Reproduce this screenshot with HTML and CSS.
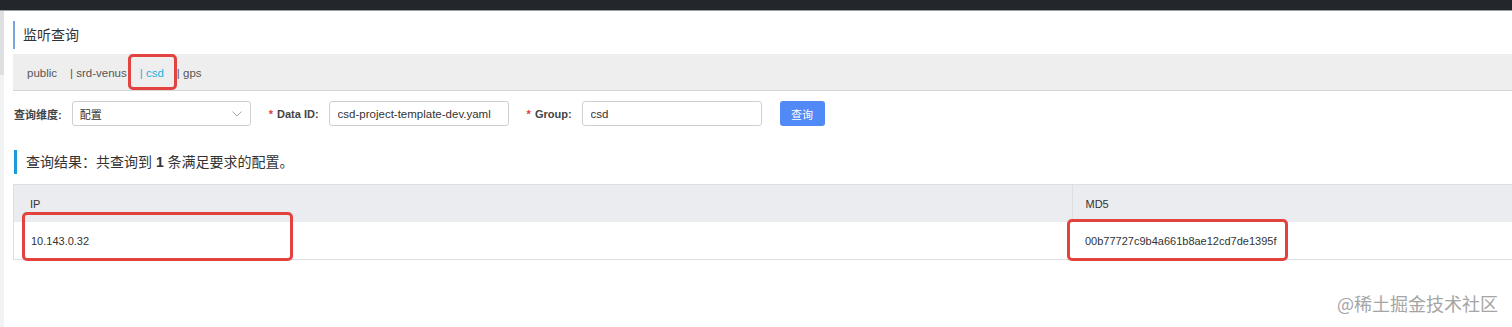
FILE: index.html
```html
<!DOCTYPE html>
<html lang="zh-CN">
<head>
  <meta charset="UTF-8" />
  <title>监听查询</title>
  <link rel="stylesheet" href="styles.css">
</head>
<body>

  <!-- top dark bar -->
  <div class="topbar"></div>

  <div class="layout">
    <div class="side"></div>

    <div class="main">
      <h2 class="page-title">监听查询</h2>

      <!-- namespace tabs -->
      <div class="tabs">
        <span class="tab">public</span>
        <span class="tab">| srd-venus</span>
        <span class="tab active">| csd</span>
        <span class="tab">| gps</span>
      </div>

      <!-- query form -->
      <div class="form-row">
        <div class="form-item">
          <label class="label">查询维度:</label>
          <div class="select">
            <span>配置</span>
            <svg class="arrow" width="10" height="6" viewBox="0 0 10 6">
              <polyline points="0.5,0.5 5,5 9.5,0.5" fill="none" stroke="#a8a8a8" stroke-width="1"/>
            </svg>
          </div>
        </div>
        <div class="form-item">
          <label class="label"><i class="req">*</i> Data ID:</label>
          <input class="input" type="text" value="csd-project-template-dev.yaml" />
        </div>
        <div class="form-item">
          <label class="label"><i class="req">*</i> Group:</label>
          <input class="input" type="text" value="csd" />
        </div>
        <button class="btn-primary">查询</button>
      </div>

      <h3 class="result-title">查询结果：共查询到 <b>1</b> 条满足要求的配置。</h3>

      <table class="table">
        <thead>
          <tr>
            <th class="col-ip">IP</th>
            <th class="col-md5">MD5</th>
          </tr>
        </thead>
        <tbody>
          <tr>
            <td class="col-ip">10.143.0.32</td>
            <td class="col-md5">00b77727c9b4a661b8ae12cd7de1395f</td>
          </tr>
        </tbody>
      </table>
    </div>
  </div>

  <!-- red annotation boxes drawn over the screenshot -->
  <div class="mark mark-tab"></div>
  <div class="mark mark-ip"></div>
  <div class="mark mark-md5"></div>

  <div class="watermark">@稀土掘金技术社区</div>

</body>
</html>
```

FILE: styles.css
```css
body {
  margin: 0;
  font-family: "Liberation Sans", Arial, "Noto Sans CJK SC", sans-serif;
  color: #333;
  background: #fff;
  height: 327px;
  overflow: hidden;
  position: relative;
}

.topbar {
  height: 10px;
  background: #23262b;
  border-bottom: 1px solid #9a9da2;
}

.layout {
  display: flex;
}

.side {
  width: 4px;
  height: 316px;
  background: linear-gradient(#dedfe1 0, #dedfe1 64px, #f1f2f3 64px);
}

.main {
  flex: 1;
  padding-left: 9px;
}

.page-title {
  margin: 10px 0 0;
  height: 28px;
  line-height: 28px;
  border-left: 2px solid #78a6dc;
  padding-left: 8px;
  font-size: 14px;
  font-weight: normal;
  color: #333;
}

/* namespace tabs */
.tabs {
  margin-top: 5px;
  height: 36px;
  background: #eeeeee;
  border-bottom: 1px solid #d6d6d6;
  display: flex;
  align-items: center;
  padding-left: 14px;
  gap: 13px;
  font-size: 11.5px;
  color: #555;
}

.tab {
  padding-top: 2px;
}

.tab.active {
  color: #22b2df;
}

/* query form */
.form-row {
  margin-top: 10px;
  display: flex;
  align-items: center;
  padding-left: 1px;
  gap: 18px;
}

.form-item {
  display: flex;
  align-items: center;
  gap: 10px;
}

.label {
  font-size: 11px;
  font-weight: bold;
  color: #444;
}

.req {
  font-style: normal;
  color: #e4393c;
  margin-right: 1px;
}

.select {
  box-sizing: border-box;
  width: 179px;
  height: 25px;
  border: 1px solid #cfcfcf;
  border-radius: 3px;
  padding: 0 8px 0 7px;
  display: flex;
  align-items: center;
  justify-content: space-between;
  font-size: 11px;
  color: #333;
}

.input {
  box-sizing: border-box;
  width: 180px;
  height: 25px;
  border: 1px solid #cfcfcf;
  border-radius: 3px;
  padding: 0 8px;
  font-family: "Liberation Sans", Arial, sans-serif;
  font-size: 11.5px;
  color: #333;
  outline: none;
}

.btn-primary {
  width: 45px;
  height: 25px;
  border: none;
  border-radius: 3px;
  background: #5189f6;
  color: #fff;
  font-family: "Noto Sans CJK SC", sans-serif;
  font-size: 11px;
  padding: 0;
}

/* results */
.result-title {
  margin: 24px 0 0 1px;
  height: 24px;
  line-height: 24px;
  border-left: 3px solid #1d9bd8;
  padding-left: 9px;
  font-size: 14px;
  font-weight: normal;
  color: #333;
}

.table {
  margin-top: 10px;
  width: 100%;
  border-collapse: collapse;
  font-size: 11px;
  color: #333;
}

.table th,
.table td {
  text-align: left;
  font-weight: normal;
  padding: 0;
  height: 37px;
}

.table th {
  background: #ebecef;
  border-top: 1px solid #dcdee2;
}

.table td {
  border-bottom: 1px solid #dcdee2;
}

.table .col-ip {
  width: 1041px;
  padding-left: 16px;
  border-left: 1px solid #dcdee2;
}

.table td.col-ip {
  padding-left: 17px;
}

.table .col-md5 {
  padding-left: 13px;
}

.table th.col-md5 {
  border-left: 1px solid #dcdee2;
}

/* annotation overlays */
.mark {
  position: absolute;
  border: 3px solid #e2433f;
  border-radius: 5px;
  box-sizing: border-box;
}

.mark-tab {
  left: 128px;
  top: 54px;
  width: 49px;
  height: 36px;
}

.mark-ip {
  left: 22px;
  top: 212px;
  width: 271px;
  height: 49px;
}

.mark-md5 {
  left: 1067px;
  top: 219px;
  width: 221px;
  height: 42px;
}

.watermark {
  position: absolute;
  right: 14px;
  top: 290px;
  font-family: "Noto Sans CJK SC", sans-serif;
  font-size: 18px;
  color: #a5a5a5;
  text-shadow: 0 0 1px #fff;
}
```
